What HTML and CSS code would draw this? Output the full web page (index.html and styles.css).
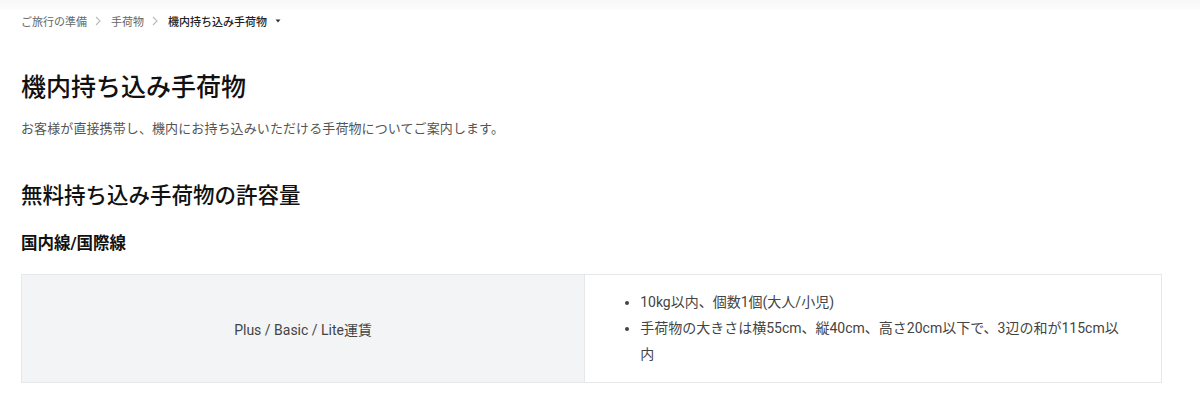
FILE: index.html
```html
<!DOCTYPE html>
<html lang="ja">
<head>
    <meta charset="UTF-8">
    <title>機内持ち込み手荷物</title>
    <link rel="stylesheet" href="styles.css">
</head>
<body>
    <div class="top-shade"></div>
    <nav class="breadcrumb">
        <a href="#">ご旅行の準備</a>
        <span class="sep"><svg width="6" height="10" viewBox="0 0 6 10"><path d="M1 1l4 4-4 4" fill="none" stroke="#bbb" stroke-width="1.1"/></svg></span>
        <a href="#">手荷物</a>
        <span class="sep"><svg width="6" height="10" viewBox="0 0 6 10"><path d="M1 1l4 4-4 4" fill="none" stroke="#bbb" stroke-width="1.1"/></svg></span>
        <span class="current">機内持ち込み手荷物</span>
        <span class="caret"><svg width="6" height="4" viewBox="0 0 6 4"><path d="M0.5 0.5h5L3 3.5z" fill="#333"/></svg></span>
    </nav>

    <main class="content">
        <h1>機内持ち込み手荷物</h1>
        <p class="lead">お客様が直接携帯し、機内にお持ち込みいただける手荷物についてご案内します。</p>

        <h2>無料持ち込み手荷物の許容量</h2>
        <h3>国内線/国際線</h3>

        <table class="allowance">
            <tr>
                <th>Plus / Basic / Lite運賃</th>
                <td>
                    <ul>
                        <li>10kg以内、個数1個(大人/小児)</li>
                        <li>手荷物の大きさは横55cm、縦40cm、高さ20cm以下で、3辺の和が115cm以内</li>
                    </ul>
                </td>
            </tr>
        </table>
    </main>
</body>
</html>
```

FILE: styles.css
```css
body {
    margin: 0;
    font-family: Roboto, "Noto Sans CJK JP", sans-serif;
    color: #222;
    background-color: white;
}
.top-shade {
    height: 10px;
    background: linear-gradient(#f7f7f7, #fcfcfc);
}
.breadcrumb {
    display: flex;
    align-items: center;
    padding: 2px 21px 0;
    height: 18px;
    font-size: 11px;
}
.breadcrumb a {
    color: #666;
    text-decoration: none;
}
.breadcrumb .sep {
    display: flex;
    margin: 0 10px 0 8px;
}
.breadcrumb .current {
    color: #222;
    font-weight: 500;
}
.breadcrumb .caret {
    display: flex;
    margin-left: 8px;
}
.content {
    padding: 0 38px 0 21px;
}
h1 {
    margin: 40px 0 0;
    font-size: 25px;
    font-weight: 500;
    line-height: 36px;
    color: #111;
}
.lead {
    margin: 12px 0 0;
    font-size: 13px;
    letter-spacing: 0.1px;
    line-height: 22px;
    color: #555;
}
h2 {
    margin: 40px 0 0;
    font-size: 21.5px;
    font-weight: 500;
    line-height: 32px;
    color: #111;
}
h3 {
    margin: 20px 0 0;
    font-size: 16.5px;
    font-weight: 700;
    line-height: 24px;
    color: #111;
}
.allowance {
    width: 100%;
    margin-top: 18px;
    border-collapse: collapse;
    border: 1px solid #e5e7eb;
}
.allowance th {
    width: 49.4%;
    background-color: #f3f4f6;
    border-right: 1px solid #e5e7eb;
    font-size: 14px;
    font-weight: 400;
    color: #444;
}
.allowance td {
    padding: 14px 40px 15px 37px;
    font-size: 14px;
    color: #444;
}
.allowance ul {
    margin: 0;
    padding-left: 18px;
}
.allowance li {
    line-height: 26px;
}
```
